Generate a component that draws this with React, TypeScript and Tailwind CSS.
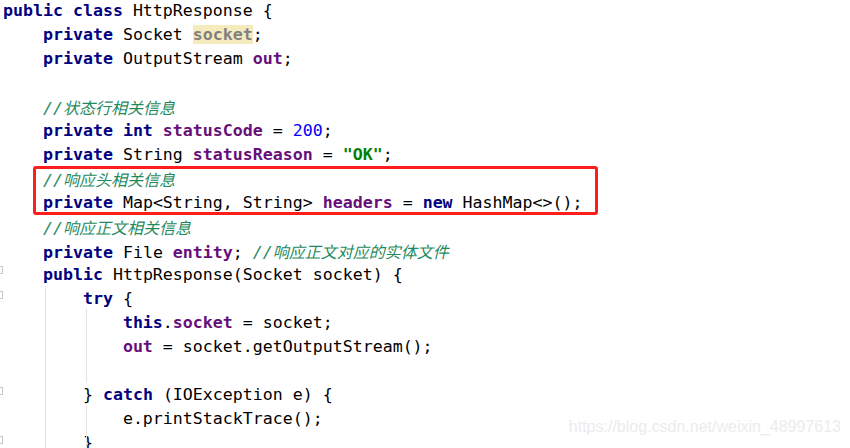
import type { ReactNode } from "react";

const kw = "text-[#000080] font-bold";
const fd = "text-[#660e7a] font-bold";
const cm = "text-[#1f8a5e] italic";

const Cjk = ({ children }: { children: ReactNode }) => (
  <span className="text-[16px] leading-[24px] [font-family:'Noto_Sans_CJK_SC',sans-serif]">{children}</span>
);

const Line = ({ indent = 0, children }: { indent?: number; children?: ReactNode }) => (
  <div className="h-[24px] leading-[24px] whitespace-pre">
    {" ".repeat(indent * 4)}
    {children}
  </div>
);

export default function App() {
  return (
    <div className="relative w-[850px] h-[448px] overflow-hidden bg-white">
      <div className="pl-[3px] mt-[-1px] text-[16.6px] text-black [font-family:'DejaVu_Sans_Mono',monospace]">
        <Line>
          <span className={kw}>public class </span>HttpResponse {"{"}
        </Line>
        <Line indent={1}>
          <span className={kw}>private </span>Socket{" "}
          <span className="bg-[#f6ebbc] text-[#808080] font-bold">socket</span>;
        </Line>
        <Line indent={1}>
          <span className={kw}>private </span>OutputStream <span className={fd}>out</span>;
        </Line>
        <Line />
        <Line indent={1}>
          <span className={cm}>
            //<Cjk>状态行相关信息</Cjk>
          </span>
        </Line>
        <Line indent={1}>
          <span className={kw}>private int </span>
          <span className={fd}>statusCode</span> = <span className="text-[#0000ff]">200</span>;
        </Line>
        <Line indent={1}>
          <span className={kw}>private </span>String <span className={fd}>statusReason</span> ={" "}
          <span className="text-[#008000] font-bold">"OK"</span>;
        </Line>
        <Line indent={1}>
          <span className={cm}>
            //<Cjk>响应头相关信息</Cjk>
          </span>
        </Line>
        <Line indent={1}>
          <span className={kw}>private </span>Map&lt;String, String&gt; <span className={fd}>headers</span> ={" "}
          <span className={kw}>new </span>HashMap&lt;&gt;();
        </Line>
        <Line indent={1}>
          <span className={cm}>
            //<Cjk>响应正文相关信息</Cjk>
          </span>
        </Line>
        <Line indent={1}>
          <span className={kw}>private </span>File <span className={fd}>entity</span>;{" "}
          <span className={cm}>
            //<Cjk>响应正文对应的实体文件</Cjk>
          </span>
        </Line>
        <Line indent={1}>
          <span className={kw}>public </span>HttpResponse(Socket socket) {"{"}
        </Line>
        <Line indent={2}>
          <span className={kw}>try </span>
          {"{"}
        </Line>
        <Line indent={3}>
          <span className={kw}>this</span>.<span className={fd}>socket</span> = socket;
        </Line>
        <Line indent={3}>
          <span className={fd}>out</span> = socket.getOutputStream();
        </Line>
        <Line />
        <Line indent={2}>
          {"} "}
          <span className={kw}>catch </span>(IOException e) {"{"}
        </Line>
        <Line indent={3}>e.printStackTrace();</Line>
        <Line indent={2}>{"}"}</Line>
      </div>

      {/* indent guides */}
      <div className="absolute left-[45px] top-[286px] bottom-0 w-px bg-[#e3e3e3]" />
      <div className="absolute left-[86px] top-[309px] h-[74px] w-px bg-[#e3e3e3]" />
      <div className="absolute left-[86px] top-[406px] bottom-0 w-px bg-[#e3e3e3]" />

      {/* fold markers */}
      <div className="absolute left-[-5px] top-[266px] w-[8px] h-[8px] border border-[#c8c8c8]" />
      <div className="absolute left-[-5px] top-[291px] w-[8px] h-[8px] border border-[#c8c8c8]" />
      <div className="absolute left-[-5px] top-[387px] w-[8px] h-[8px] border border-[#c8c8c8]" />
      <div className="absolute left-[-5px] top-[436px] w-[8px] h-[8px] border border-[#c8c8c8]" />

      {/* annotation box */}
      <div className="absolute left-[33px] top-[166px] w-[565px] h-[49px] border-[3px] border-[#fd1d1d] rounded-[3px]" />

      <div className="absolute right-[9px] bottom-[9px] text-[16px] text-[#ececec] [font-family:'Liberation_Sans',Arial,sans-serif]">
        https://blog.csdn.net/weixin_48997613
      </div>
    </div>
  );
}
